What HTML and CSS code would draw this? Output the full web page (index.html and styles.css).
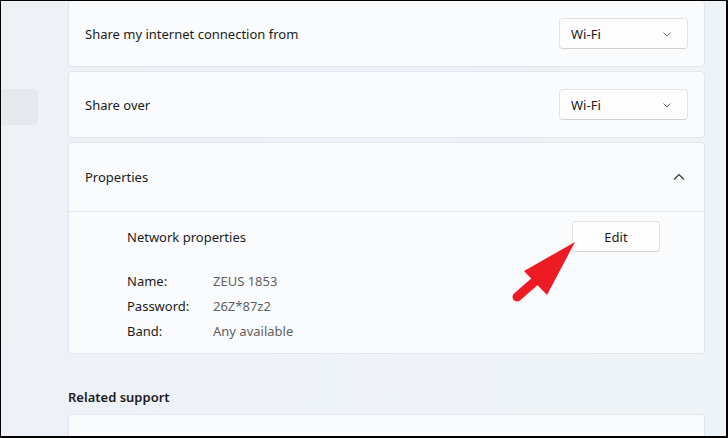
FILE: index.html
```html
<!DOCTYPE html>
<html lang="en">
<head>
<meta charset="UTF-8">
<meta name="viewport" content="width=device-width, initial-scale=1.0">
<title>Mobile hotspot</title>
<link rel="stylesheet" href="styles.css">
</head>
<body>

<div class="window">
    <div class="sidebar">
        <div class="nav-pill"></div>
    </div>

    <div class="main">
        <div class="card setting-row">
            <span>Share my internet connection from</span>
            <div class="dropdown">
                <span>Wi-Fi</span>
                <svg class="chevron" width="10" height="6" viewBox="0 0 10 6"><path d="M1.5 1.5l3.5 3.5 3.5-3.5" fill="none" stroke="#6a6a6a" stroke-width="1"/></svg>
            </div>
        </div>

        <div class="card setting-row">
            <span>Share over</span>
            <div class="dropdown">
                <span>Wi-Fi</span>
                <svg class="chevron" width="10" height="6" viewBox="0 0 10 6"><path d="M1.5 1.5l3.5 3.5 3.5-3.5" fill="none" stroke="#6a6a6a" stroke-width="1"/></svg>
            </div>
        </div>

        <div class="card expander">
            <div class="expander-head">
                <span>Properties</span>
                <svg width="12" height="8" viewBox="0 0 12 8"><path d="M1 6.5l5-5 5 5" fill="none" stroke="#333" stroke-width="1.2"/></svg>
            </div>
            <div class="expander-body">
                <div class="prop-title">
                    <span>Network properties</span>
                    <button class="edit-btn">Edit</button>
                </div>
                <div class="prop-list">
                    <span class="prop-label">Name:</span><span class="prop-value">ZEUS 1853</span>
                    <span class="prop-label">Password:</span><span class="prop-value">26Z*87z2</span>
                    <span class="prop-label">Band:</span><span class="prop-value">Any available</span>
                </div>
            </div>
        </div>

        <h3 class="section-title">Related support</h3>
        <div class="card support-card"></div>
    </div>

    <!-- red pointer drawn over the screenshot -->
    <svg class="pointer" width="728" height="438" viewBox="0 0 728 438">
        <line x1="517" y1="297" x2="541" y2="276" stroke="#ed1c24" stroke-width="9" stroke-linecap="round"/>
        <polygon points="575,242 524,271 547,295" fill="#ed1c24"/>
    </svg>
</div>

</body>
</html>
```

FILE: styles.css
```css
body {
    margin: 0;
    padding: 0;
    font-family: "Noto Sans", "Segoe UI", Arial, sans-serif;
    font-size: 13px;
    color: #1b1b1b;
}
.window {
    position: relative;
    width: 728px;
    height: 438px;
    box-sizing: border-box;
    border-style: solid;
    border-color: #000;
    border-width: 1px 2px 2px 1px;
    overflow: hidden;
    display: flex;
    background: linear-gradient(100deg, #eef2f7 0%, #eef2f9 50%, #edf3f6 100%);
}
.sidebar {
    width: 67px;
    flex-shrink: 0;
}
.nav-pill {
    margin-top: 88px;
    width: 37px;
    height: 36px;
    background-color: #e5e9ee;
    border-radius: 0 5px 5px 0;
}
.main {
    width: 637px;
    margin-top: -1px;
    display: flex;
    flex-direction: column;
    gap: 4px;
}
.main > * {
    flex-shrink: 0;
}
.card {
    background-color: #f9fbfc;
    border: 1px solid #e2e6eb;
    border-radius: 4px;
    box-sizing: border-box;
}
.setting-row {
    height: 67px;
    padding: 0 16px;
    display: flex;
    align-items: center;
    justify-content: space-between;
}
.dropdown {
    width: 129px;
    height: 31px;
    box-sizing: border-box;
    padding: 0 15px 0 11px;
    display: flex;
    align-items: center;
    justify-content: space-between;
    background-color: #fdfdfd;
    border: 1px solid #e4e4e4;
    border-bottom-color: #d2d2d2;
    border-radius: 4px;
}
.expander-head {
    height: 68px;
    padding: 0 19px 0 16px;
    display: flex;
    align-items: center;
    justify-content: space-between;
    border-bottom: 1px solid #e2e6eb;
}
.expander-body {
    padding: 9px 44px 10px 58px;
}
.prop-title {
    height: 31px;
    display: flex;
    align-items: center;
    justify-content: space-between;
}
.edit-btn {
    width: 88px;
    height: 31px;
    font-family: inherit;
    font-size: 13px;
    color: #1b1b1b;
    background-color: #fdfdfd;
    border: 1px solid #e4e4e4;
    border-bottom-color: #d2d2d2;
    border-radius: 4px;
}
.prop-list {
    margin-top: 16px;
    display: grid;
    grid-template-columns: 86px auto;
    grid-auto-rows: 25px;
    align-items: center;
}
.prop-value {
    color: #5f5f5f;
}
.section-title {
    margin: 29px 0 3px 0;
    font-size: 13px;
    font-weight: 600;
    line-height: 20px;
}
.support-card {
    height: 60px;
}
.pointer {
    position: absolute;
    left: -1px;
    top: -1px;
    pointer-events: none;
}
```
